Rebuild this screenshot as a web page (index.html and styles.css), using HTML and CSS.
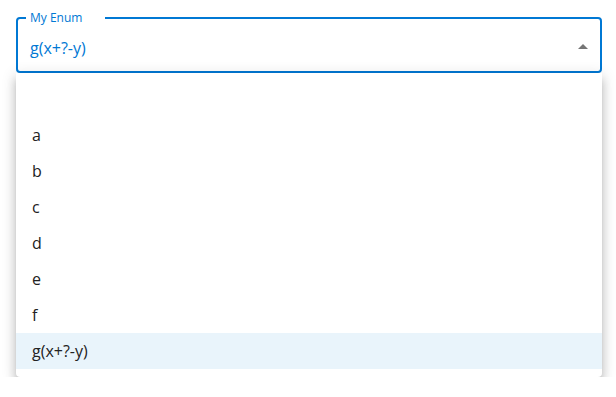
FILE: index.html
```html
<!DOCTYPE html>
<html>
<head>
<meta charset="utf-8">
<link rel="stylesheet" href="styles.css">
</head>
<body>
<div class="wrap">
  <fieldset class="field">
    <legend class="label">My Enum</legend>
    <div class="value-row">
      <span class="value">g(x+?-y)</span>
      <svg class="arrow" width="10" height="5" viewBox="0 0 10 5"><path d="M0 5 L5 0 L10 5 Z" fill="#757575"/></svg>
    </div>
  </fieldset>
  <ul class="menu">
    <li class="item"></li>
    <li class="item">a</li>
    <li class="item">b</li>
    <li class="item">c</li>
    <li class="item">d</li>
    <li class="item">e</li>
    <li class="item">f</li>
    <li class="item selected">g(x+?-y)</li>
  </ul>
</div>
</body>
</html>
```
FILE: styles.css
```css
html, body {
  margin: 0;
  padding: 0;
  background: #ffffff;
}
body {
  font-family: "Open Sans", "Noto Sans", sans-serif;
}
.wrap {
  padding: 11px 14px 0 16px;
}
.field {
  margin: 0;
  border: 2px solid #0078d4;
  border-radius: 4px;
  padding: 0 12px 0 8px;
  min-width: 0;
}
.label {
  font-size: 12px;
  line-height: 14px;
  color: #0078d4;
  padding: 0 23px 0 4px;
  margin: 0;
}
.value-row {
  display: flex;
  align-items: center;
  justify-content: space-between;
  padding: 13px 0 13px 4px;
  height: 20px;
}
.value {
  font-size: 16px;
  line-height: 20px;
  color: #0078d4;
}
.arrow {
  display: block;
  margin-top: -4px;
}
.menu {
  list-style: none;
  margin: 0;
  padding: 8px 0;
  background: #fff;
  border-radius: 0 0 4px 4px;
  box-shadow: 0 5px 5px -3px rgba(0,0,0,.2), 0 8px 10px 1px rgba(0,0,0,.14), 0 3px 14px 2px rgba(0,0,0,.12);
}
.item {
  height: 36px;
  display: flex;
  align-items: center;
  padding: 0 16px;
  font-size: 16px;
  color: #222;
}
.item.selected {
  background: #e9f4fb;
}
```
